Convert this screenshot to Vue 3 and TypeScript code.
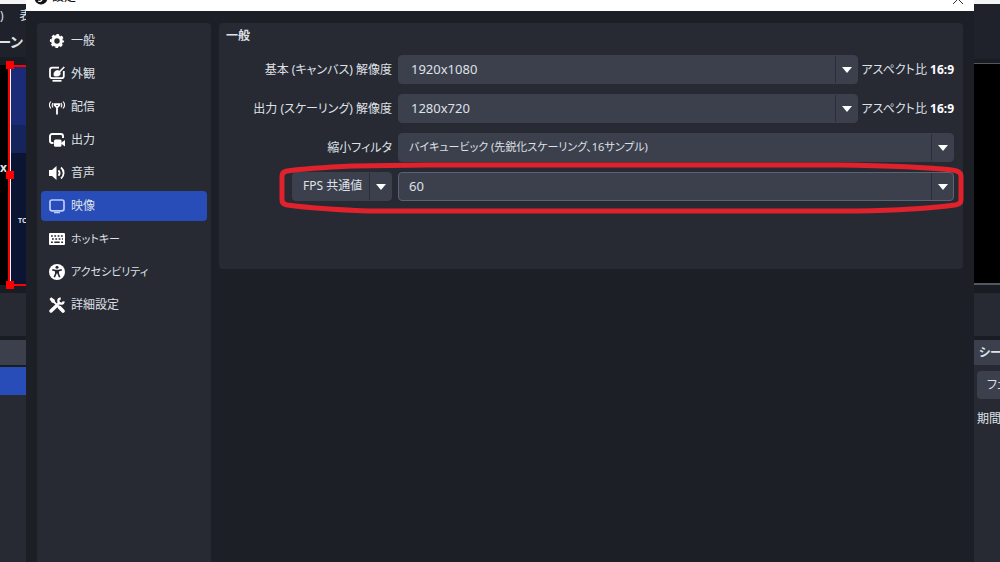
<script setup lang="ts">
import { ref } from 'vue'

interface Category {
  id: string
  label: string
  compact?: boolean
}

const categories: Category[] = [
  { id: 'general', label: '一般' },
  { id: 'appearance', label: '外観' },
  { id: 'stream', label: '配信' },
  { id: 'output', label: '出力' },
  { id: 'audio', label: '音声' },
  { id: 'video', label: '映像' },
  { id: 'hotkeys', label: 'ホットキー', compact: true },
  { id: 'accessibility', label: 'アクセシビリティ', compact: true },
  { id: 'advanced', label: '詳細設定' },
]

const active = ref('video')
const baseResolution = ref('1920x1080')
const outputResolution = ref('1280x720')
const filter = ref('バイキュービック (先鋭化スケーリング、16サンプル)')
const fpsType = ref('FPS 共通値')
const fps = ref('60')
</script>

<template>
  <div class="desktop">
    <aside class="backdrop left">
      <div class="window-edge"></div>
      <div class="menu-strip"><span>)</span><span>表</span></div>
      <div class="scene-title">ーン</div>
      <div class="preview">
        <div class="source">
          <div class="source-top"></div>
          <div class="source-mid"></div>
          <div class="source-low"><span>TC</span></div>
        </div>
        <span class="overlay-letter">x</span>
        <i class="handle h-top"></i>
        <i class="handle h-mid"></i>
        <i class="handle h-end"></i>
      </div>
      <div class="toolbar"></div>
      <div class="dock-title"></div>
      <div class="dock-row"></div>
      <div class="dock-body"></div>
    </aside>

    <main class="dialog">
      <header class="titlebar">
        <svg class="app-logo" viewBox="0 0 14 14" aria-hidden="true">
          <circle cx="7" cy="7" r="6.5" fill="#111" />
          <path d="M4 10c2 1 4 0 4-2M8 8c2-1 3-1 4 0" stroke="#fff" stroke-width="1.3" fill="none" />
        </svg>
        <span class="title">設定</span>
        <button class="close" type="button" aria-label="閉じる">
          <svg viewBox="0 0 12 12"><path d="M1 1l10 10M11 1L1 11" stroke="#333" fill="none" /></svg>
        </button>
      </header>

      <div class="content">
        <nav class="sidebar">
          <button
            v-for="c in categories"
            :key="c.id"
            type="button"
            class="category"
            :class="{ active: c.id === active, compact: c.compact }"
            @click="active = c.id"
          >
            <svg class="icon" viewBox="0 0 16 16" aria-hidden="true">
              <template v-if="c.id === 'general'">
                <circle cx="8" cy="8" r="4.3" fill="none" stroke="#fff" stroke-width="3.2" />
                <circle cx="8" cy="8" r="6.2" fill="none" stroke="#fff" stroke-width="1.8" stroke-dasharray="2.7 2.17" stroke-dashoffset="1.35" />
              </template>
              <template v-else-if="c.id === 'appearance'">
                <path d="M10 1.700H3.200A2.200 2.200 0 0 0 1 3.900v6a2.200 2.200 0 0 0 2.200 2.200h9.400a2.200 2.200 0 0 0 2.200-2.200V5" fill="none" stroke="#fff" stroke-width="1.800" />
                <path d="M5 9.800c-.5-2.700.6-5 3-5.300 1.300-.2 2 0 2.500.5L14.800.8l.7.6L11 6.200c.5 1 .4 2-.2 2.800-1 1.300-3.800 1.400-5.800.8z" fill="#fff" stroke="#fff" stroke-width=".6" />
                <path d="M3.500 14.800h9" stroke="#fff" stroke-width="1.800" />
              </template>
              <template v-else-if="c.id === 'stream'">
                <path d="M4.600 5.200h6.800M5 5.400l3 3.200 3-3.200M8 8v7.500" fill="none" stroke="#fff" stroke-width="1.800" />
                <path d="M2 2.500C.2 4.500.2 7.500 2 9.500M4 4C3 5.300 3 7 4 8.300M14 2.500c1.800 2 1.800 5 0 7M12 4c1 1.300 1 3 0 4.300" fill="none" stroke="#fff" stroke-width="1.100" />
              </template>
              <template v-else-if="c.id === 'output'">
                <path d="M4.500 11H3.200A2.200 2.200 0 0 1 1 8.800V4.200A2.200 2.200 0 0 1 3.200 2h8.600A2.200 2.200 0 0 1 14 4.200V6" fill="none" stroke="#fff" stroke-width="1.900" />
                <rect x="5" y="7.500" width="7.500" height="7.300" rx="1.500" fill="#fff" />
                <path d="M11.500 11.200L16 8v6.600z" fill="#fff" />
              </template>
              <template v-else-if="c.id === 'audio'">
                <path d="M0 5h3l4.500-4v14L3 11H0z" fill="#fff" />
                <path d="M9.500 5.200c1.400 1.700 1.400 3.900 0 5.600M12 2.500c3.500 3 3.500 8 0 11" fill="none" stroke="#fff" stroke-width="1.800" />
              </template>
              <template v-else-if="c.id === 'video'">
                <rect x="1" y="2" width="14" height="10.800" rx="2" fill="none" stroke="#bccbff" stroke-width="1.700" />
                <path d="M5 14.600h6" stroke="#bccbff" stroke-width="1.400" />
              </template>
              <template v-else-if="c.id === 'hotkeys'">
                <rect x="0" y="2" width="16" height="12" rx="1" fill="#fff" />
                <path d="M2 5h12M3 8h11" stroke="#272a33" stroke-width="1.400" stroke-dasharray="1.800 1.500" />
                <path d="M2 11.200h1.800M5.300 11.200h5.400M12.200 11.200H14" stroke="#272a33" stroke-width="1.400" />
              </template>
              <template v-else-if="c.id === 'accessibility'">
                <circle cx="8" cy="8" r="8" fill="#fff" />
                <circle cx="8" cy="3.300" r="1.500" fill="#272a33" />
                <path d="M3.200 5.700l3.300.9h3l3.300-.9M8 6.500v3M6.800 7v2.500L5.300 13.200M9.200 7v2.500l1.500 3.700" fill="none" stroke="#272a33" stroke-width="1.600" />
              </template>
              <template v-else>
                <path d="M3.500 3.500l6 6" stroke="#fff" stroke-width="1.800" />
                <path d="M.5 2l1.700-1.700 3.600 2.400v2.100l-1 1H3z" fill="#fff" />
                <path d="M10.300 10.300l3.700 3.700" stroke="#fff" stroke-width="3.600" stroke-linecap="round" />
                <path d="M2 14l4.700-4.500" stroke="#fff" stroke-width="3.400" stroke-linecap="round" />
                <path d="M8.500 7.500l2.500-2.500" stroke="#fff" stroke-width="2.400" />
                <path d="M14.700 4.300a2.700 2.700 0 1 1-3-3" fill="none" stroke="#fff" stroke-width="2.200" />
              </template>
            </svg>
            <span>{{ c.label }}</span>
          </button>
        </nav>

        <section class="panel">
          <h2>一般</h2>
          <div class="form">
            <label for="base">基本 (キャンバス) 解像度</label>
            <div class="field">
              <div class="combo editable">
                <select id="base" v-model="baseResolution"><option>1920x1080</option></select>
                <svg class="arrow" viewBox="0 0 10 6"><path d="M0 0h10L5 6z" /></svg>
              </div>
              <span class="aspect">アスペクト比 <b>16:9</b></span>
            </div>

            <label for="out">出力 (スケーリング) 解像度</label>
            <div class="field">
              <div class="combo editable">
                <select id="out" v-model="outputResolution"><option>1280x720</option></select>
                <svg class="arrow" viewBox="0 0 10 6"><path d="M0 0h10L5 6z" /></svg>
              </div>
              <span class="aspect">アスペクト比 <b>16:9</b></span>
            </div>

            <label for="filter">縮小フィルタ</label>
            <div class="field">
              <div class="combo compact">
                <select id="filter" v-model="filter"><option>バイキュービック (先鋭化スケーリング、16サンプル)</option></select>
                <svg class="arrow" viewBox="0 0 10 6"><path d="M0 0h10L5 6z" /></svg>
              </div>
            </div>

            <div class="combo fps-type">
              <select v-model="fpsType" aria-label="FPS の種類"><option>FPS 共通値</option></select>
              <svg class="arrow" viewBox="0 0 10 6"><path d="M0 0h10L5 6z" /></svg>
            </div>
            <div class="field">
              <div class="combo focused">
                <select v-model="fps" aria-label="FPS 共通値"><option>60</option></select>
                <svg class="arrow" viewBox="0 0 10 6"><path d="M0 0h10L5 6z" /></svg>
              </div>
            </div>

            <svg class="marker" viewBox="0 0 688 52" preserveAspectRatio="none" aria-hidden="true">
              <path d="M4 14Q4 10 9 9Q30 6 75 4L150 3H560Q640 4 675 8Q684 9 684 14V38Q684 42 678 43Q640 48 580 49H90Q40 47 9 43Q4 42 4 38Z" />
            </svg>
          </div>
        </section>
      </div>
    </main>

    <aside class="backdrop right">
      <div class="window-edge"></div>
      <div class="menu-strip"></div>
      <div class="preview"></div>
      <div class="toolbar"></div>
      <div class="dock-title">シーン</div>
      <div class="dock-body">
        <button type="button" class="transition">フェード</button>
        <span class="duration">期間</span>
      </div>
    </aside>
  </div>
</template>

<style>
body {
  margin: 0;
  background: #1d1f26;
}
</style>

<style scoped>
* {
  box-sizing: border-box;
}

.desktop {
  display: grid;
  grid-template-columns: 26px minmax(0, 1fr) 26px;
  height: 100vh;
  overflow: hidden;
  font: 12px/16px 'Noto Sans', 'Noto Sans CJK JP', sans-serif;
  font-feature-settings: 'palt';
  color: #dfe1e7;
}

button,
select {
  font: inherit;
  font-feature-settings: inherit;
  color: inherit;
  border: 0;
  margin: 0;
}

.backdrop {
  display: flex;
  flex-direction: column;
  min-width: 0;
  overflow: hidden;
  white-space: nowrap;
  background: #1a1c23;
}

.backdrop > * {
  flex: none;
}

.window-edge {
  height: 4px;
  background: #f4f5f7;
}

.menu-strip {
  display: flex;
  gap: 16px;
  height: 24px;
  padding-top: 4px;
  background: #1f222a;
}

.scene-title {
  display: flex;
  justify-content: flex-end;
  height: 29px;
  padding: 4px 3px 0 0;
  font-size: 14px;
  line-height: 20px;
  font-weight: 700;
  background: #1f222a;
}

.left .preview {
  position: relative;
  height: 236px;
  padding: 8px 0 0 8px;
  background: linear-gradient(#1a1c23 8px, #000 8px, #000 228px, #1a1c23 228px);
}

.source {
  display: flex;
  flex-direction: column;
  height: 221px;
  border-top: 2px solid #f00;
  border-bottom: 2px solid #f00;
  border-left: 2px solid #f00;
  box-shadow: inset 1px 0 #fff;
}

.source > div {
  margin-left: 1px;
}

.source-top {
  height: 58px;
  background: #1c2b78;
}

.source-mid {
  height: 28px;
  background: #16245c;
}

.source-low {
  flex: 1;
  padding: 60px 0 0 7px;
  font-size: 7px;
  font-weight: 700;
  background: #0c1433;
}

.overlay-letter {
  position: absolute;
  left: 0;
  top: 103px;
  font-weight: 700;
}

.handle {
  position: absolute;
  left: 6px;
  width: 8px;
  height: 8px;
  background: #f00;
}

.h-top {
  top: 4px;
}

.h-mid {
  top: 114px;
}

.h-end {
  top: 224px;
}

.toolbar {
  height: 43px;
  background: #272a33;
}

.dock-title {
  height: 25px;
  margin-top: 4px;
  padding: 5px 0 0 5px;
  font-weight: 700;
  background: #3c404d;
}

.dock-row {
  height: 28px;
  margin-top: 2px;
  background: #284cb8;
}

.backdrop > .dock-body {
  flex: 1;
  background: #272a33;
}

.right .menu-strip {
  height: 55px;
}

.right .preview {
  height: 222px;
  margin: 4px 0 8px;
  border-top: 1px solid #55575e;
  border-bottom: 2px solid #55575e;
  background: #000;
}

.transition {
  display: block;
  width: 96px;
  height: 28px;
  margin: 6px 0 0 3px;
  padding: 0 0 0 10px;
  text-align: left;
  border-radius: 4px;
  background: #3c404d;
}

.duration {
  display: block;
  margin: 12px 0 0 3px;
}

.dialog {
  display: flex;
  flex-direction: column;
  min-width: 0;
  background: #1d1f26;
}

.titlebar {
  display: flex;
  flex: none;
  align-items: flex-end;
  height: 11px;
  padding: 0 10px 6px 8px;
  overflow: hidden;
  color: #111;
  background: #fff;
}

.app-logo {
  flex: none;
  width: 14px;
  height: 14px;
  margin-right: 4px;
}

.close {
  display: flex;
  margin-left: auto;
  padding: 0;
  background: none;
}

.close svg {
  width: 12px;
  height: 12px;
}

.content {
  display: flex;
  flex: 1;
  align-items: flex-start;
  gap: 8px;
  min-height: 0;
  padding: 12px 11px 0;
}

.sidebar {
  display: flex;
  flex: none;
  flex-direction: column;
  align-self: stretch;
  gap: 3px;
  width: 174px;
  padding: 3px 4px;
  border-radius: 4px 4px 0 0;
  background: #272a33;
}

.category {
  display: flex;
  align-items: center;
  gap: 6px;
  height: 30px;
  padding: 0 8px;
  border-radius: 4px;
  text-align: left;
  background: none;
}

.category.active {
  background: #284cb8;
}

.compact {
  font-size: 11px;
}

.icon {
  flex: none;
  width: 16px;
  height: 16px;
}

.panel {
  flex: 1;
  min-width: 0;
  padding: 5px 9px 68px 7px;
  border-radius: 4px;
  background: #272a33;
}

h2 {
  margin: 0 0 11px;
  font-size: 12px;
  line-height: 16px;
}

.form {
  position: relative;
  display: grid;
  grid-template-columns: 166px minmax(0, 1fr);
  gap: 10px 6px;
  align-items: center;
}

label {
  text-align: right;
}

.field {
  display: flex;
  align-items: center;
  gap: 4px;
}

.combo {
  position: relative;
  flex: 1;
  min-width: 0;
}

.combo select {
  display: block;
  width: 100%;
  height: 29px;
  padding: 0 30px 2px 10px;
  border: 1px solid #3c404d;
  border-radius: 4px;
  outline: 0;
  appearance: none;
  background: linear-gradient(#2b2e38, #2b2e38) right 21px top / 1px 100% no-repeat #3c404d;
}

.combo.editable select {
  padding-left: 12px;
  font-size: 13px;
}

.combo.focused select {
  font-size: 13px;
  border-color: #5b6273;
}

.fps-type {
  justify-self: end;
}

.fps-type select {
  width: 100px;
  padding-right: 24px;
}

.arrow {
  position: absolute;
  top: 12px;
  right: 6px;
  width: 10px;
  height: 6px;
  fill: #fff;
  pointer-events: none;
}

.aspect {
  flex: none;
  white-space: nowrap;
}

.aspect b {
  color: #fff;
}

.marker {
  position: absolute;
  left: 52px;
  bottom: -13px;
  width: calc(100% - 41px);
  height: 52px;
  pointer-events: none;
}

.marker path {
  fill: none;
  stroke: #df222c;
  stroke-width: 5px;
  stroke-linejoin: round;
}
</style>
